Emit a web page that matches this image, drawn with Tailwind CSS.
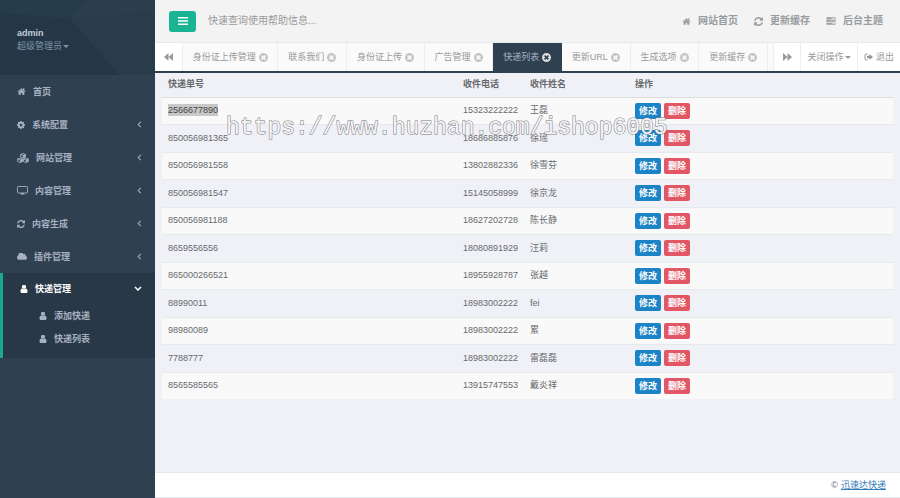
<!DOCTYPE html>
<html lang="zh-CN">
<head>
<meta charset="utf-8">
<title>快递列表</title>
<script src="https://cdn.jsdelivr.net/npm/@tailwindcss/browser@4"></script>
</head>
<body class="flex min-h-screen bg-[#2f4050] font-['Liberation_Sans','Noto_Sans_CJK_SC',sans-serif] text-[9px] leading-3 text-[#676a6c]">
<svg class="hidden">
  <symbol id="home" viewBox="0 0 1792 1792"><path d="M1472 992v480q0 26-19 45t-45 19h-384v-384h-256v384h-384q-26 0-45-19t-19-45v-480q0-1 .5-3t.5-3l575-474 575 474q1 2 1 6zm223-69l-62 74q-8 9-21 11h-3q-13 0-21-7l-692-577-692 577q-12 8-24 7-13-2-21-11l-62-74q-8-10-7-23.5t11-21.5l719-599q32-26 76-26t76 26l244 204v-195q0-14 9-23t23-9h192q14 0 23 9t9 23v408l219 182q10 8 11 21.5t-7 23.5z"/></symbol>
  <symbol id="user" viewBox="180 200 1432 1456"><path d="M1536 1399q0 109-62.5 187t-150.5 78h-854q-88 0-150.5-78t-62.5-187q0-85 8.5-160.5t31.5-152 58.5-131 94-89 134.5-34.5q131 128 313 128t313-128q76 0 134.5 34.5t94 89 58.5 131 31.5 152 8.5 160.5zm-256-887q0 159-112.5 271.5t-271.5 112.5-271.5-112.500-112.5-271.5 112.5-271.5 271.5-112.5 271.5 112.5 112.5 271.5z"/></symbol>
  <symbol id="refresh" viewBox="128 128 1536 1536"><path d="M1639 1056q0 5-1 7-64 268-268 434.5t-478 166.5q-146 0-282.5-55t-243.5-157l-129 129q-19 19-45 19t-45-19-19-45v-448q0-26 19-45t45-19h448q26 0 45 19t19 45-19 45l-137 137q71 66 161 102t187 36q134 0 250-65t186-179q11-17 53-117 8-23 30-23h192q13 0 22.5 9.5t9.5 22.5zm25-800v448q0 26-19 45t-45 19h-448q-26 0-45-19t-19-45 19-45l138-138q-148-137-349-137-134 0-250 65t-186 179q-11 17-53 117-8 23-30 23h-199q-13 0-22.5-9.5t-9.5-22.5v-7q65-268 270-434.5t480-166.5q146 0 284 55.5t245 156.5l130-129q19-19 45-19t45 19 19 45z"/></symbol>
  <symbol id="cog" viewBox="128 128 1536 1536"><path d="M1152 896q0-106-75-181t-181-75-181 75-75 181 75 181 181 75 181-75 75-181zm512-109v222q0 12-8 23t-20 13l-185 28q-19 54-39 91 35 50 107 138 10 12 10 25t-9 23q-27 37-99 108t-94 71q-12 0-26-9l-138-108q-44 23-91 38-16 136-29 186-7 28-36 28h-222q-14 0-24.5-8.5t-11.5-21.5l-28-184q-49-16-90-37l-141 107q-10 9-25 9-14 0-25-11-126-114-165-168-7-10-7-23 0-12 8-23 15-21 51-66.5t54-70.5q-27-50-41-99l-183-27q-13-2-21-12.5t-8-23.5v-222q0-12 8-23t19-13l186-28q14-46 39-92-40-57-107-138-10-12-10-24 0-10 9-23 26-36 98.5-107.5t94.5-71.5q13 0 26 10l138 107q44-23 91-38 16-136 29-186 7-28 36-28h222q14 0 24.5 8.5t11.5 21.5l28 184q49 16 90 37l142-107q9-9 24-9 13 0 25 10 129 119 165 170 7 8 7 22 0 12-8 23-15 21-51 66.5t-54 70.5q26 50 41 98l183 28q13 2 21 12.5t8 23.5z"/></symbol>
  <symbol id="cloud" viewBox="64 256 1920 1280"><path d="M1984 1152q0 159-112.5 271.5t-271.5 112.5h-1088q-185 0-316.5-131.5t-131.5-316.5q0-132 71-241.5t187-163.5q-2-28-2-43 0-212 150-362t362-150q158 0 286.5 88t187.5 230q70-62 166-62 106 0 181 75t75 181q0 75-41 138 129 30 213 134.5t84 239.5z"/></symbol>
  <symbol id="cubes" viewBox="0 0 24 20"><g fill="none" stroke="currentColor" stroke-width="1.8" stroke-linejoin="round"><path d="M12 1l4.800 2v5L12 10.200 7.200 8V3zM6.200 10l4.800 2v5l-4.800 2L1.200 17v-5zM17.800 10l4.800 2v5l-4.800 2-4.800-2v-5z"/><path d="M7.200 3L12 5l4.800-2M1.200 12l5 2 4.800-2M13 12l4.800 2 4.800-2"/></g><path d="M12 5l4.800-2v5L12 10.200zM6.200 14l4.800-2v5l-4.800 2zM17.800 14l4.800-2v5l-4.800 2z"/></symbol>
  <symbol id="desktop" viewBox="0 0 22 18"><rect x="1" y="1" width="20" height="13" rx="1.500" fill="none" stroke="currentColor" stroke-width="1.800"/><path d="M8 14h6l1 3H7z"/></symbol>
  <symbol id="bars" viewBox="0 0 10 8"><path d="M0 0h10v1.500H0zM0 3.200h10v1.500H0zM0 6.400h10v1.500H0z"/></symbol>
  <symbol id="server" viewBox="0 0 22 16"><path fill-rule="evenodd" d="M1 0h20v4.500H1zM1 5.800h20v4.500H1zM1 11.600h20v4.400H1zM12 1.500v1.300h7.500V1.500zM6 7.300v1.300h13.500V7.300zM14 13.200v1.300h5.500v-1.300z"/></symbol>
  <symbol id="forward" viewBox="0 0 9 8"><path d="M0 0l4.500 4L0 8zM4.500 0L9 4 4.500 8z"/></symbol>
  <symbol id="back" viewBox="0 0 9 8"><path d="M9 0L4.500 4 9 8zM4.500 0L0 4l4.500 4z"/></symbol>
  <symbol id="close" viewBox="0 0 16 16"><path fill-rule="evenodd" d="M8 0a8 8 0 100 16A8 8 0 008 0zM5.600 3.600L8 6l2.400-2.400 2 2L10 8l2.400 2.400-2 2L8 10l-2.400 2.400-2-2L6 8 3.600 5.600z"/></symbol>
  <symbol id="exit" viewBox="0 0 18 16"><path d="M7 2H4a2 2 0 00-2 2v8a2 2 0 002 2h3" fill="none" stroke="currentColor" stroke-width="2"/><path d="M11 2l7 6-7 6v-3.500H6v-5h5z"/></symbol>
  <symbol id="left" viewBox="0 0 5 8"><path d="M4 1L1 4l3 3" fill="none" stroke="currentColor" stroke-width="1.200"/></symbol>
  <symbol id="down" viewBox="0 0 8 5"><path d="M1 1l3 3 3-3" fill="none" stroke="currentColor" stroke-width="1.500"/></symbol>
  <symbol id="caret" viewBox="0 0 6 3"><path d="M0 0h6L3 3z"/></symbol>
</svg>

<aside class="w-[155px] shrink-0 text-[#a7b1c2]">
  <header class="relative h-[75px] bg-[#263949] pt-[27px] pl-[17px]">
    <svg class="absolute inset-0 size-full" viewBox="0 0 155 75" preserveAspectRatio="none">
      <path d="M0 0h85L70 19 0 13z" fill="#273c4b"/><path d="M85 0h70v75h-36L70 19z" fill="#283c4a"/><path d="M85 0h70v12L70 19z" fill="#2a3e4c"/><path d="M0 13l70 6 49 56H0z" fill="#243747"/>
    </svg>
    <div class="relative">
      <strong class="block text-[#c3cbd6]">admin</strong>
      <button class="flex items-center gap-px leading-[14px] text-[#8095a8]">超级管理员<svg class="h-[3px] w-[6px] fill-current"><use href="#caret"/></svg></button>
    </div>
  </header>
  <nav class="font-bold">
    <a href="#" class="flex h-[33px] items-center gap-[7px] pr-[13px] pl-[17px]"><svg class="size-[9px] fill-current"><use href="#home"/></svg>首页</a>
    <a href="#" class="flex h-[33px] items-center gap-[7px] pr-[13px] pl-[17px]"><svg class="size-[8px] fill-current"><use href="#cog"/></svg>系统配置<svg class="ml-auto h-[7px] w-[5px]"><use href="#left"/></svg></a>
    <a href="#" class="flex h-[33px] items-center gap-[7px] pr-[13px] pl-[17px]"><svg class="h-[10px] w-[12px] fill-current"><use href="#cubes"/></svg>网站管理<svg class="ml-auto h-[7px] w-[5px]"><use href="#left"/></svg></a>
    <a href="#" class="flex h-[33px] items-center gap-[7px] pr-[13px] pl-[17px]"><svg class="h-[9px] w-[11px] fill-current"><use href="#desktop"/></svg>内容管理<svg class="ml-auto h-[7px] w-[5px]"><use href="#left"/></svg></a>
    <a href="#" class="flex h-[33px] items-center gap-[7px] pr-[13px] pl-[17px]"><svg class="size-[8px] fill-current"><use href="#refresh"/></svg>内容生成<svg class="ml-auto h-[7px] w-[5px]"><use href="#left"/></svg></a>
    <a href="#" class="flex h-[33px] items-center gap-[7px] pr-[13px] pl-[17px]"><svg class="h-[7px] w-[10px] fill-current"><use href="#cloud"/></svg>插件管理<svg class="ml-auto h-[7px] w-[5px]"><use href="#left"/></svg></a>
    <div class="border-l-3 border-[#19aa8d] bg-[#293846] pb-2">
      <a href="#" class="flex h-[31px] items-center gap-[7px] pr-[13px] pl-[17px] text-white"><svg class="size-[8px] fill-current"><use href="#user"/></svg>快递管理<svg class="ml-auto h-[5px] w-[8px]"><use href="#down"/></svg></a>
      <a href="#" class="flex h-[23px] items-center gap-[7px] pl-9"><svg class="size-[8px] fill-current"><use href="#user"/></svg>添加快递</a>
      <a href="#" class="flex h-[23px] items-center gap-[7px] pl-9"><svg class="size-[8px] fill-current"><use href="#user"/></svg>快递列表</a>
    </div>
  </nav>
</aside>

<div class="relative flex min-w-0 flex-1 flex-col bg-[#f0f1f7]">
  <header class="flex h-[42px] items-center bg-[#f3f3f4] pr-[17px] pl-[14px] text-[10px] text-[#999c9e]">
    <button aria-label="菜单" class="flex h-[21px] w-[27px] items-center justify-center rounded-[3px] bg-[#1ab394] text-white"><svg class="h-[8px] w-[10px] fill-current"><use href="#bars"/></svg></button>
    <input type="text" aria-label="搜索" placeholder="快速查询使用帮助信息..." class="ml-3 w-[160px] bg-transparent outline-none placeholder:text-[#999]">
    <nav class="ml-auto flex items-center gap-4 font-bold">
      <a href="#" class="flex items-center gap-[7px]"><svg class="size-[9px] fill-current"><use href="#home"/></svg>网站首页</a>
      <a href="#" class="flex items-center gap-[7px]"><svg class="size-[9px] fill-current"><use href="#refresh"/></svg>更新缓存</a>
      <a href="#" class="flex items-center gap-[7px]"><svg class="h-[8px] w-[10px] fill-current"><use href="#server"/></svg>后台主题</a>
    </nav>
  </header>

  <div class="flex h-[31px] shrink-0 border-t border-b-2 border-t-[#e7eaec] border-b-[#2f4050] bg-[#fafafa] whitespace-nowrap text-[#999]">
    <button aria-label="向左" class="flex w-[28px] shrink-0 items-center justify-center border-r border-[#eee] bg-white"><svg class="h-[8px] w-[9px] fill-current"><use href="#back"/></svg></button>
    <nav id="tabs" class="mr-[5px] flex min-w-0 flex-1"></nav>
    <button aria-label="向右" class="flex w-[28px] shrink-0 items-center justify-center border-x border-[#eee] bg-white"><svg class="h-[8px] w-[9px] fill-current"><use href="#forward"/></svg></button>
    <button class="flex w-[57px] shrink-0 items-center justify-center gap-px border-r border-[#eee] bg-white">关闭操作<svg class="h-[3px] w-[6px] fill-current"><use href="#caret"/></svg></button>
    <a href="#" class="flex w-[42px] shrink-0 items-center justify-center gap-[3px] bg-white"><svg class="h-[8px] w-[9px] fill-current"><use href="#exit"/></svg>退出</a>
  </div>

  <main class="flex-1 px-[7px]">
    <table class="w-full table-fixed border-collapse text-left">
      <thead>
        <tr class="h-[24px] border-b border-[#ddd]">
          <th class="w-[295px] pb-[2px] pl-[6px]">快递单号</th>
          <th class="w-[67px] pb-[2px] pl-[6px]">收件电话</th>
          <th class="w-[105px] pb-[2px] pl-[6px]">收件姓名</th>
          <th class="pb-[2px] pl-[6px]">操作</th>
        </tr>
      </thead>
      <tbody id="rows"></tbody>
    </table>
  </main>

  <footer class="flex h-[26px] items-center justify-end gap-[3px] border-y border-[#e7eaec] bg-white pr-[14px]">©<a href="#" class="text-[#337ab7] underline">迅速达快递</a></footer>

  <div class="pointer-events-none absolute top-[113px] left-[71px] text-[23px] leading-[30px] whitespace-nowrap text-[#f4f4f7] font-['Liberation_Mono',monospace] [-webkit-text-stroke:1px_#777] [paint-order:stroke]">https://www.huzhan.com/ishop6005</div>
</div>

<script>
const tabs = ['身份证上传管理', '联系我们', '身份证上传', '广告管理', '快递列表', '更新URL', '生成选项', '更新缓存'];
document.getElementById('tabs').innerHTML = tabs.map(t => `
  <a href="#" class="flex min-w-0 items-center justify-center gap-[3px] border-r px-[10px] ${t === '快递列表' ? 'border-[#2f4050] bg-[#2f4050] text-[#a7b1c2]' : 'border-[#eee]'}"><span>${t}</span><svg class="size-[9px] shrink-0 fill-current ${t === '快递列表' ? 'text-[#ddd]' : 'text-[#c4c4c4]'}"><use href="#close"/></svg></a>`).join('');

const rows = [
  ['2566677890', '15323222222', '王磊'],
  ['850056981365', '18686885876', '徐瑶'],
  ['850056981558', '13802882336', '徐雪芬'],
  ['850056981547', '15145058999', '徐京龙'],
  ['850056981188', '18627202728', '陈长静'],
  ['8659556556', '18080891929', '汪莉'],
  ['865000266521', '18955928787', '张越'],
  ['88990011', '18983002222', 'fei'],
  ['98980089', '18983002222', '累'],
  ['7788777', '18983002222', '雷磊磊'],
  ['8565585565', '13915747553', '戴炎祥']
];
document.getElementById('rows').innerHTML = rows.map(([no, tel, name], i) => `
  <tr class="border-t border-[#e7eaec] odd:h-[27px] odd:bg-[#f9f9f9] even:h-[28px]">
    <td class="pb-px pl-[6px]"><span class="${i ? '' : 'bg-[#c8c8c8] py-px text-[#444]'}">${no}</span></td>
    <td class="pb-px pl-[6px]">${tel}</td>
    <td class="pb-px pl-[6px]">${name}</td>
    <td class="pl-[6px]"><div class="flex gap-[3px] font-bold text-white"><button class="h-4 w-[26px] rounded-[2px] bg-[#1c84c6]">修改</button><button class="h-4 w-[26px] rounded-[2px] bg-[#e25766]">删除</button></div></td>
  </tr>`).join('');
</script>
</body>
</html>
